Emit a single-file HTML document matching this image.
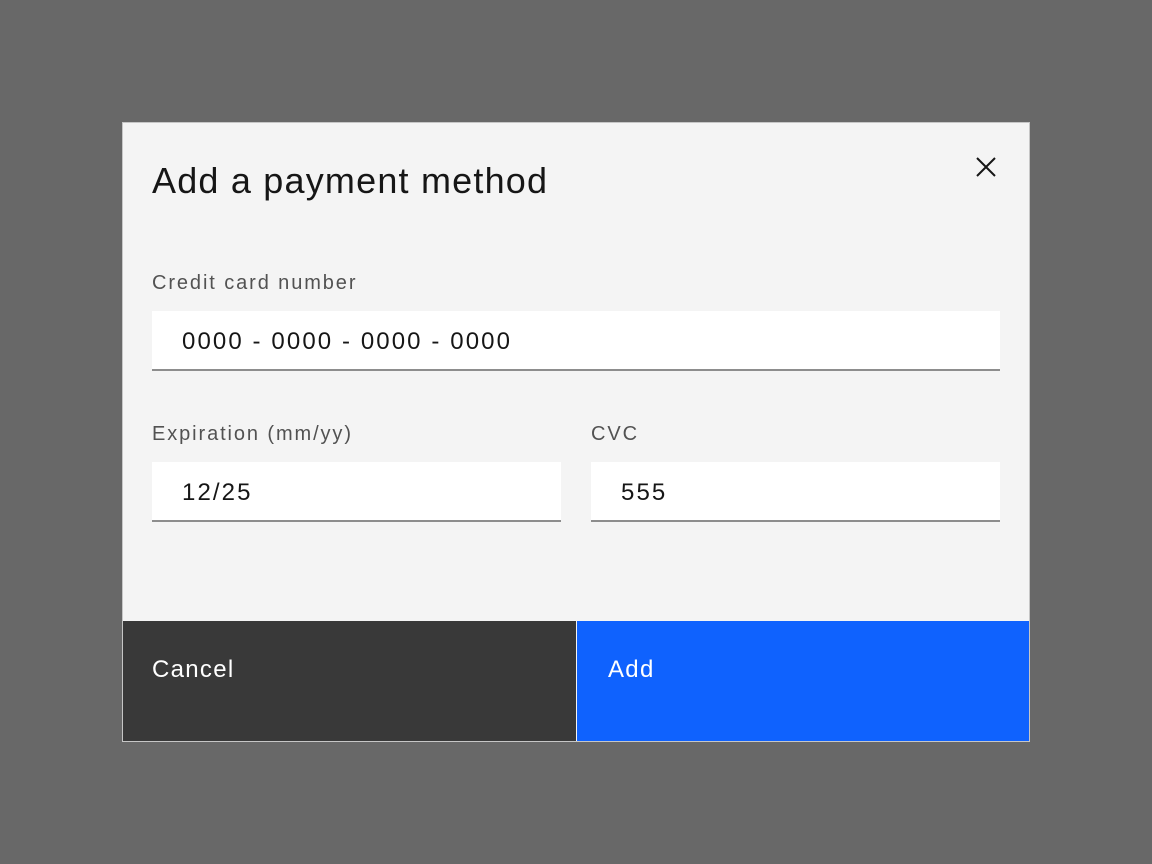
<!DOCTYPE html>
<html><head><meta charset="utf-8"><style>
*{box-sizing:border-box;margin:0;padding:0}
body{width:1152px;height:864px;background:#686868;position:relative;overflow:hidden;font-family:"Liberation Sans",sans-serif}
.m{position:absolute;left:122px;top:122px;width:908px;height:620px;background:#f4f4f4;border:1px solid #c6c6c6}
.t{position:absolute;left:29px;top:37px;font-size:36px;color:#161616;letter-spacing:1.2px}
.l{position:absolute;font-size:20px;color:#525252;letter-spacing:1.9px}
.i{position:absolute;background:#fff;border-bottom:2px solid #8d8d8d;height:60px;font-size:24px;color:#161616;padding-left:30px;line-height:62px;letter-spacing:2.1px}
.b{position:absolute;top:498px;height:120px;font-size:24px;color:#fff;padding:35px 0 0 29px;letter-spacing:1.3px}
</style></head><body>
<div class="m">
<div class="t">Add a payment method</div>
<svg style="position:absolute;left:853px;top:34px" width="20" height="20" viewBox="0 0 20 20"><path d="M1 1L19 19M19 1L1 19" stroke="#161616" stroke-width="2"/></svg>
<div class="l" style="left:29px;top:149px">Credit card number</div>
<div class="i" style="left:29px;top:188px;width:848px">0000 - 0000 - 0000 - 0000</div>
<div class="l" style="left:29px;top:300px">Expiration (mm/yy)</div>
<div class="i" style="left:29px;top:339px;width:409px">12/25</div>
<div class="l" style="left:468px;top:300px">CVC</div>
<div class="i" style="left:468px;top:339px;width:409px">555</div>
<div class="b" style="left:0;width:453px;background:#393939">Cancel</div>
<div class="b" style="left:454px;width:452px;background:#0f62fe;padding-left:31px">Add</div>
</div>
</body></html>
